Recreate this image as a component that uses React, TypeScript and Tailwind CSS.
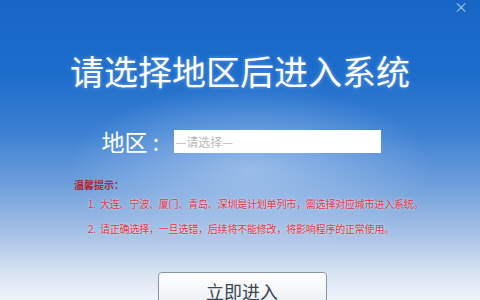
export default function App() {
  return (
    <div
      className="relative w-[480px] h-[300px] overflow-hidden flex flex-col items-center"
      style={{
        fontFamily: '"Noto Sans CJK SC", "Noto Sans", sans-serif',
        background:
          'radial-gradient(ellipse 260px 120px at 250px 170px, rgba(200,220,245,0.55), rgba(200,220,245,0) 70%), linear-gradient(180deg, #1766c6 0%, #1d6dcc 25%, #3f82d3 45%, #6f9fdc 62%, #a7c2e6 78%, #dbe6f3 92%, #eef3f8 100%)',
      }}
    >
      {/* close */}
      <span className="absolute top-[-2px] right-[12px] text-[14px] leading-[16px] text-white/60">×</span>

      <h1 className="mt-[50px] text-[34px] leading-[42px] text-white font-normal [text-shadow:0_0_4px_rgba(255,255,255,0.35)]">
        请选择地区后进入系统
      </h1>

      <div className="mt-[38px] flex items-center pl-[2px]">
        <span className="w-[72px] text-[23px] leading-[23px] text-white">地区 :</span>
        <div className="w-[207px] h-[23px] bg-white flex items-center pl-[2px] text-[12px] text-[#b8b8b8]">
          —请选择—
        </div>
      </div>

      <div className="self-start ml-[74px] mt-[25px] flex flex-col">
        <span className="text-[10px] leading-[14px] text-[#b0262d] font-bold">温馨提示：</span>
        <div className="ml-[14px] mt-[5px] flex flex-col gap-[11px] text-[10px] leading-[14px] tracking-[-0.2px] text-[#e6353d] [text-shadow:0_0_3px_rgba(255,255,255,0.8)]">
          <span>1.&nbsp;&nbsp;大连、宁波、厦门、青岛、深圳是计划单列市，需选择对应城市进入系统。</span>
          <span>2.&nbsp;&nbsp;请正确选择，一旦选错，后续将不能修改，将影响程序的正常使用。</span>
        </div>
      </div>

      <button className="mt-[36px] ml-[4px] w-[169px] h-[38px] shrink-0 rounded-[4px] border border-[#8794a2] bg-gradient-to-b from-white to-[#e9edf1] text-[18px] text-[#3b4752] flex items-center justify-center">
        立即进入
      </button>
    </div>
  );
}
